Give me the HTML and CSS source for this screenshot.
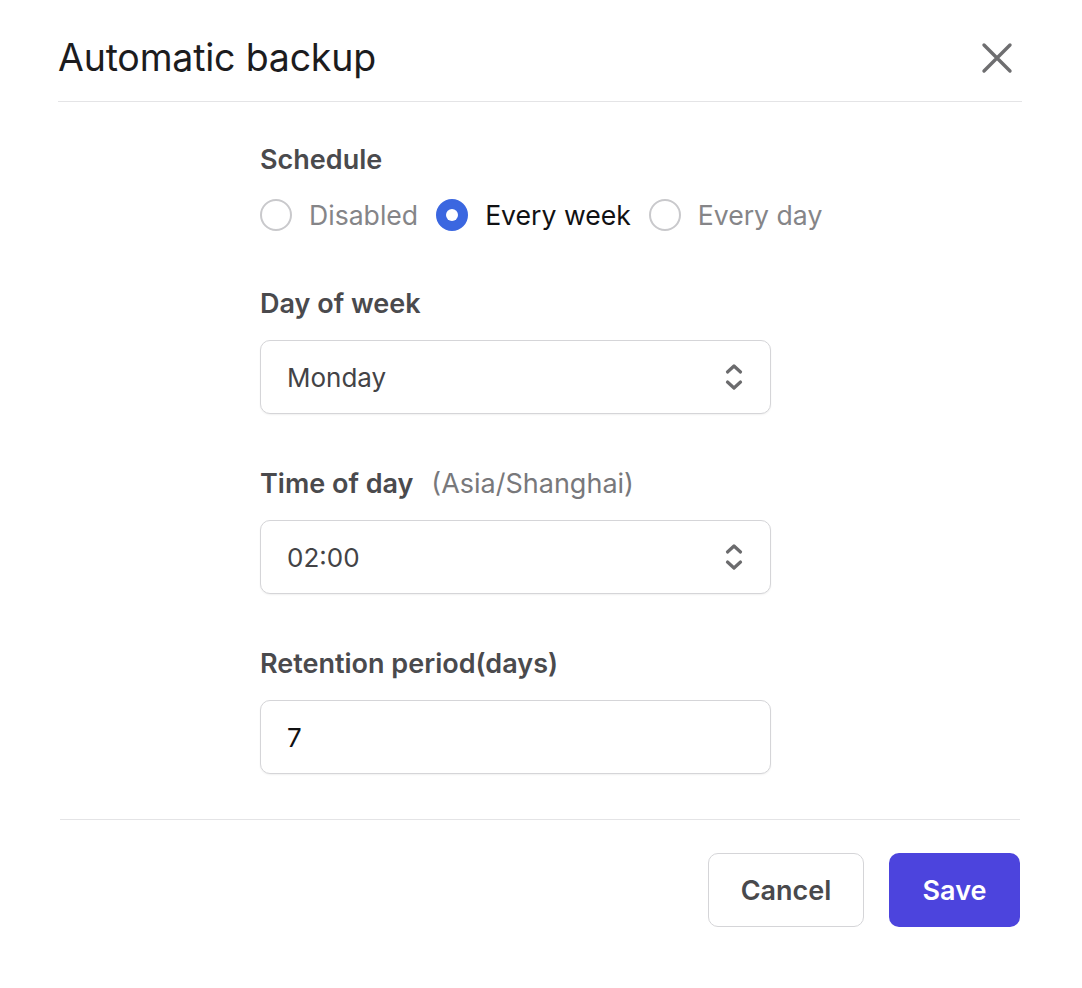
FILE: index.html
```html
<!DOCTYPE html>
<html lang="en">
<head>
<meta charset="utf-8">
<title>Automatic backup</title>
<link rel="stylesheet" href="styles.css">
</head>
<body>
<div class="dialog">
  <header class="dlg-head">
    <h1 class="dlg-title">Automatic backup</h1>
    <button class="close-btn" aria-label="Close">
      <svg width="34" height="34" viewBox="0 0 34 34" fill="none" stroke="#6e6e70" stroke-width="3.4" stroke-linecap="round">
        <path d="M4 4 L30 30 M30 4 L4 30"/>
      </svg>
    </button>
  </header>

  <div class="dlg-body">
    <div class="form">
      <div class="group first">
        <div class="label">Schedule</div>
        <div class="radios">
          <div class="radio"><span class="dot"></span><span class="radio-text">Disabled</span></div>
          <div class="radio checked"><span class="dot"></span><span class="radio-text">Every week</span></div>
          <div class="radio"><span class="dot"></span><span class="radio-text">Every day</span></div>
        </div>
      </div>

      <div class="group">
        <div class="label">Day of week</div>
        <div class="box select">
          <span class="value">Monday</span>
          <svg class="chev" width="20" height="30" viewBox="0 0 20 30" fill="none" stroke="#6b6b6d" stroke-width="3.2" stroke-linecap="round" stroke-linejoin="round">
            <path d="M3.5 10 L10 4 L16.5 10"/>
            <path d="M3.5 20 L10 26 L16.5 20"/>
          </svg>
        </div>
      </div>

      <div class="group">
        <div class="label">Time of day <span class="tz">(Asia/Shanghai)</span></div>
        <div class="box select">
          <span class="value">02:00</span>
          <svg class="chev" width="20" height="30" viewBox="0 0 20 30" fill="none" stroke="#6b6b6d" stroke-width="3.2" stroke-linecap="round" stroke-linejoin="round">
            <path d="M3.5 10 L10 4 L16.5 10"/>
            <path d="M3.5 20 L10 26 L16.5 20"/>
          </svg>
        </div>
      </div>

      <div class="group">
        <div class="label">Retention period(days)</div>
        <div class="box input">
          <span class="value dark">7</span>
        </div>
      </div>
    </div>
  </div>

  <footer class="dlg-foot">
    <button class="btn cancel">Cancel</button>
    <button class="btn save">Save</button>
  </footer>
</div>
</body>
</html>
```

FILE: styles.css
```css
* { box-sizing: border-box; }

html, body {
  margin: 0;
  padding: 0;
  background: #ffffff;
}

body {
  font-family: "Inter", "Noto Sans", "Liberation Sans", sans-serif;
  color: #1c1c1e;
}

.dialog {
  width: 1082px;
  height: 988px;
  background: #fff;
}

.dlg-head {
  height: 102px;
  margin: 0 60px 0 58px;
  padding-top: 14px;
  display: flex;
  align-items: center;
  justify-content: space-between;
  border-bottom: 1.5px solid #e4e4e6;
}

.dlg-title {
  margin: 0;
  font-size: 37.5px;
  font-weight: 400;
  line-height: 46px;
  color: #1c1c1e;
  letter-spacing: -0.2px;
}

.close-btn {
  width: 34px;
  height: 34px;
  padding: 0;
  margin-right: 8px;
  border: none;
  background: transparent;
  display: flex;
}

.dlg-body {
  padding: 42px 0 45px 0;
}

.form {
  margin-left: 260px;
  width: 511px;
  display: flex;
  flex-direction: column;
  gap: 54px;
}

.group {
  display: flex;
  flex-direction: column;
  gap: 20px;
}

.group.first {
  padding-bottom: 3px;
}

.label {
  font-size: 27px;
  line-height: 32px;
  font-weight: 600;
  color: #4a4a4d;
  white-space: nowrap;
}

.tz {
  font-weight: 400;
  color: #78787b;
  margin-left: 11px;
  font-size: 27px;
}

.radios {
  display: flex;
  align-items: center;
  gap: 18px;
  margin-top: 3px;
  white-space: nowrap;
}

.radio {
  display: flex;
  flex-shrink: 0;
  align-items: center;
  gap: 17px;
  height: 32px;
}

.dot {
  width: 32px;
  height: 32px;
  flex-shrink: 0;
  border-radius: 50%;
  border: 2px solid #c9c9cc;
  background: #fff;
  position: relative;
}

.radio.checked .dot {
  border-color: #3b67e0;
  background: #3b67e0;
}

.radio.checked .dot::after {
  content: "";
  position: absolute;
  left: 50%;
  top: 50%;
  width: 12px;
  height: 12px;
  margin: -6px 0 0 -6px;
  border-radius: 50%;
  background: #fff;
}

.radio-text {
  font-size: 26.6px;
  line-height: 32px;
  color: #858588;
}

.radio.checked .radio-text {
  color: #111113;
}

.box {
  height: 74px;
  border: 1.5px solid #d5d5d8;
  border-radius: 10px;
  background: #fff;
  box-shadow: 0 1px 2px rgba(0, 0, 0, 0.06);
  display: flex;
  align-items: center;
  justify-content: space-between;
  padding: 0 26px 0 26px;
}

.value {
  font-size: 26px;
  color: #434346;
}

.value.dark {
  color: #111113;
}

.chev {
  display: block;
}

.dlg-foot {
  margin: 0 62px 0 60px;
  border-top: 1.5px solid #e4e4e6;
  padding-top: 33px;
  display: flex;
  justify-content: flex-end;
  gap: 25px;
}

.btn {
  height: 74px;
  border-radius: 10px;
  font-family: "Inter", "Noto Sans", "Liberation Sans", sans-serif;
  font-size: 27px;
  font-weight: 600;
  cursor: pointer;
}

.cancel {
  width: 156px;
  background: #fff;
  border: 1.5px solid #d5d5d8;
  color: #49494c;
}

.save {
  width: 131px;
  background: #4c44dd;
  border: none;
  color: #fff;
}
```
